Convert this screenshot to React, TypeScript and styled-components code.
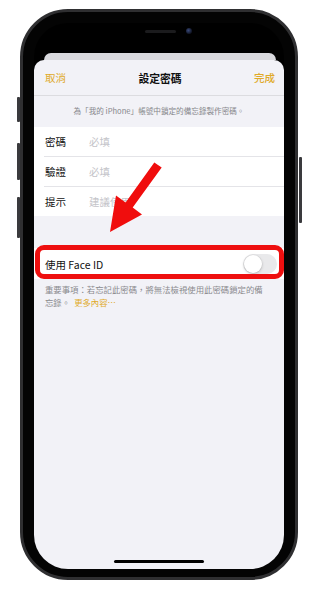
import React from 'react'
import styled, { createGlobalStyle } from 'styled-components'

const GlobalStyle = createGlobalStyle`
  html, body {
    margin: 0;
    padding: 0;
    background: #ffffff;
  }
  body {
    font-family: "Noto Sans CJK TC", "Noto Sans", sans-serif;
    -webkit-font-smoothing: antialiased;
  }
`

const Stage = styled.div`
  padding: 9px 0 0 20px;
  width: 318px;
  height: 592px;
  box-sizing: border-box;
`

const Phone = styled.div`
  position: relative;
  width: 278px;
  height: 571px;
  box-sizing: border-box;
  border: 3px solid #2f2f31;
  border-radius: 48px;
  background: #040404;
  padding: 11px 11px 8px 11px;
  display: flex;
`

const SideButton = styled.div<{ side: 'left' | 'right'; top: number; h: number }>`
  position: absolute;
  ${(p) => (p.side === 'left' ? 'left: -6px;' : 'right: -7px;')}
  top: ${(p) => p.top}px;
  width: 3px;
  height: ${(p) => p.h}px;
  background: #3a3a3d;
  border-radius: 1px;
`

const Screen = styled.div`
  flex: 1;
  border-radius: 34px;
  overflow: hidden;
  background: #000;
  display: flex;
  flex-direction: column;
`

const TopArea = styled.div`
  height: 37px;
  display: flex;
  flex-direction: column;
  justify-content: space-between;
`

const SensorRow = styled.div`
  display: flex;
  align-items: center;
  justify-content: center;
  gap: 10px;
  padding-left: 18px;
  padding-top: 5px;
`

const Speaker = styled.div`
  width: 31px;
  height: 3px;
  border-radius: 2px;
  background: #1b1b1d;
`

const Camera = styled.div`
  width: 6px;
  height: 6px;
  border-radius: 50%;
  background: radial-gradient(circle at 40% 40%, #3a4a7a 0%, #141a2e 60%, #0a0a10 100%);
`

const BackCard = styled.div`
  height: 7px;
  margin: 0 8px 0 10px;
  border-radius: 10px 10px 0 0;
  background: #d9d9de;
`

const Sheet = styled.div`
  position: relative;
  flex: 1;
  background: #f2f2f7;
  border-radius: 10px 10px 0 0;
  display: flex;
  flex-direction: column;
`

const Header = styled.div`
  height: 36px;
  box-sizing: border-box;
  border-bottom: 1px solid #dcdce0;
  display: flex;
  align-items: center;
  justify-content: space-between;
  padding: 0 9px 0 11px;
  font-size: 10.5px;
`

const NavButton = styled.span<{ bold?: boolean }>`
  color: #e0aa2a;
  font-weight: ${(p) => (p.bold ? 500 : 400)};
  width: 40px;
  text-align: ${(p) => (p.bold ? 'right' : 'left')};
`

const Title = styled.span`
  color: #111;
  font-weight: 700;
  font-size: 10.8px;
`

const Description = styled.div`
  height: 31px;
  display: flex;
  align-items: center;
  justify-content: center;
  padding-bottom: 2px;
  box-sizing: border-box;
  font-size: 7.6px;
  color: #86868b;
`

const Group = styled.div`
  background: #ffffff;
`

const Row = styled.div`
  height: 29px;
  margin-left: 10px;
  padding-left: 1px;
  display: flex;
  align-items: center;
  font-size: 10.5px;
  & + & {
    border-top: 1px solid #e4e4e8;
  }
`

const Label = styled.span`
  width: 44px;
  color: #111;
`

const Placeholder = styled.span`
  color: #c4c4c9;
`

const FaceWrap = styled.div`
  position: relative;
  margin-top: 32px;
`

const FaceRow = styled.div`
  height: 31px;
  background: #ffffff;
  display: flex;
  align-items: center;
  justify-content: space-between;
  padding: 1px 7px 0 11px;
  box-sizing: border-box;
  font-size: 10.5px;
  color: #111;
`

const Highlight = styled.div`
  position: absolute;
  left: 1px;
  right: 0;
  top: -3px;
  bottom: 0;
  border: 5px solid #ee0f0f;
  border-radius: 9px;
  pointer-events: none;
`

const Toggle = styled.div`
  width: 34px;
  height: 20px;
  border-radius: 10px;
  background: #e9e9eb;
  display: flex;
  align-items: center;
  padding: 0 1px;
  box-sizing: border-box;
`

const Knob = styled.div`
  width: 18px;
  height: 18px;
  border-radius: 50%;
  background: #fff;
  box-shadow: 0 1px 3px rgba(0, 0, 0, 0.22), 0 0 0 0.5px rgba(0, 0, 0, 0.05);
`

const Footer = styled.div`
  padding: 4px 12px 0 11px;
  font-size: 8.4px;
  line-height: 13px;
  color: #8a8a8e;
  white-space: nowrap;
`

const More = styled.span`
  color: #e0aa2a;
  margin-left: 4px;
`

const Arrow = styled.svg`
  position: absolute;
  left: 0;
  top: 0;
  width: 250px;
  height: 300px;
  pointer-events: none;
`

const HomeBar = styled.div`
  margin: auto auto 6px;
  width: 90px;
  height: 3px;
  border-radius: 2px;
  background: #000;
`

const fields = [
  { label: '密碼', hint: '必填' },
  { label: '驗證', hint: '必填' },
  { label: '提示', hint: '建議使用' },
]

export default function App() {
  return (
    <Stage>
      <GlobalStyle />
      <Phone>
        <SideButton side="left" top={85} h={25} />
        <SideButton side="left" top={131} h={37} />
        <SideButton side="left" top={185} h={41} />
        <SideButton side="right" top={145} h={66} />
        <Screen>
          <TopArea>
            <SensorRow>
              <Speaker />
              <Camera />
            </SensorRow>
            <BackCard />
          </TopArea>
          <Sheet>
            <Header>
              <NavButton>取消</NavButton>
              <Title>設定密碼</Title>
              <NavButton bold>完成</NavButton>
            </Header>
            <Description>為「我的 iPhone」帳號中鎖定的備忘錄製作密碼。</Description>
            <Group>
              {fields.map((f) => (
                <Row key={f.label}>
                  <Label>{f.label}</Label>
                  <Placeholder>{f.hint}</Placeholder>
                </Row>
              ))}
            </Group>
            <FaceWrap>
              <FaceRow>
                <span>使用 Face ID</span>
                <Toggle>
                  <Knob />
                </Toggle>
              </FaceRow>
              <Highlight />
            </FaceWrap>
            <Footer>
              重要事項：若忘記此密碼，將無法檢視使用此密碼鎖定的備
              <br />
              忘錄。
              <More>更多內容⋯</More>
            </Footer>
            <HomeBar />
            <Arrow viewBox="0 0 250 300">
              <polygon
                points="120.3,102.4 127.7,107.6 98.7,147.6 108,154.4 76,172 82,135.6 91.6,142.4"
                fill="#f00d0d"
              />
            </Arrow>
          </Sheet>
        </Screen>
      </Phone>
    </Stage>
  )
}
